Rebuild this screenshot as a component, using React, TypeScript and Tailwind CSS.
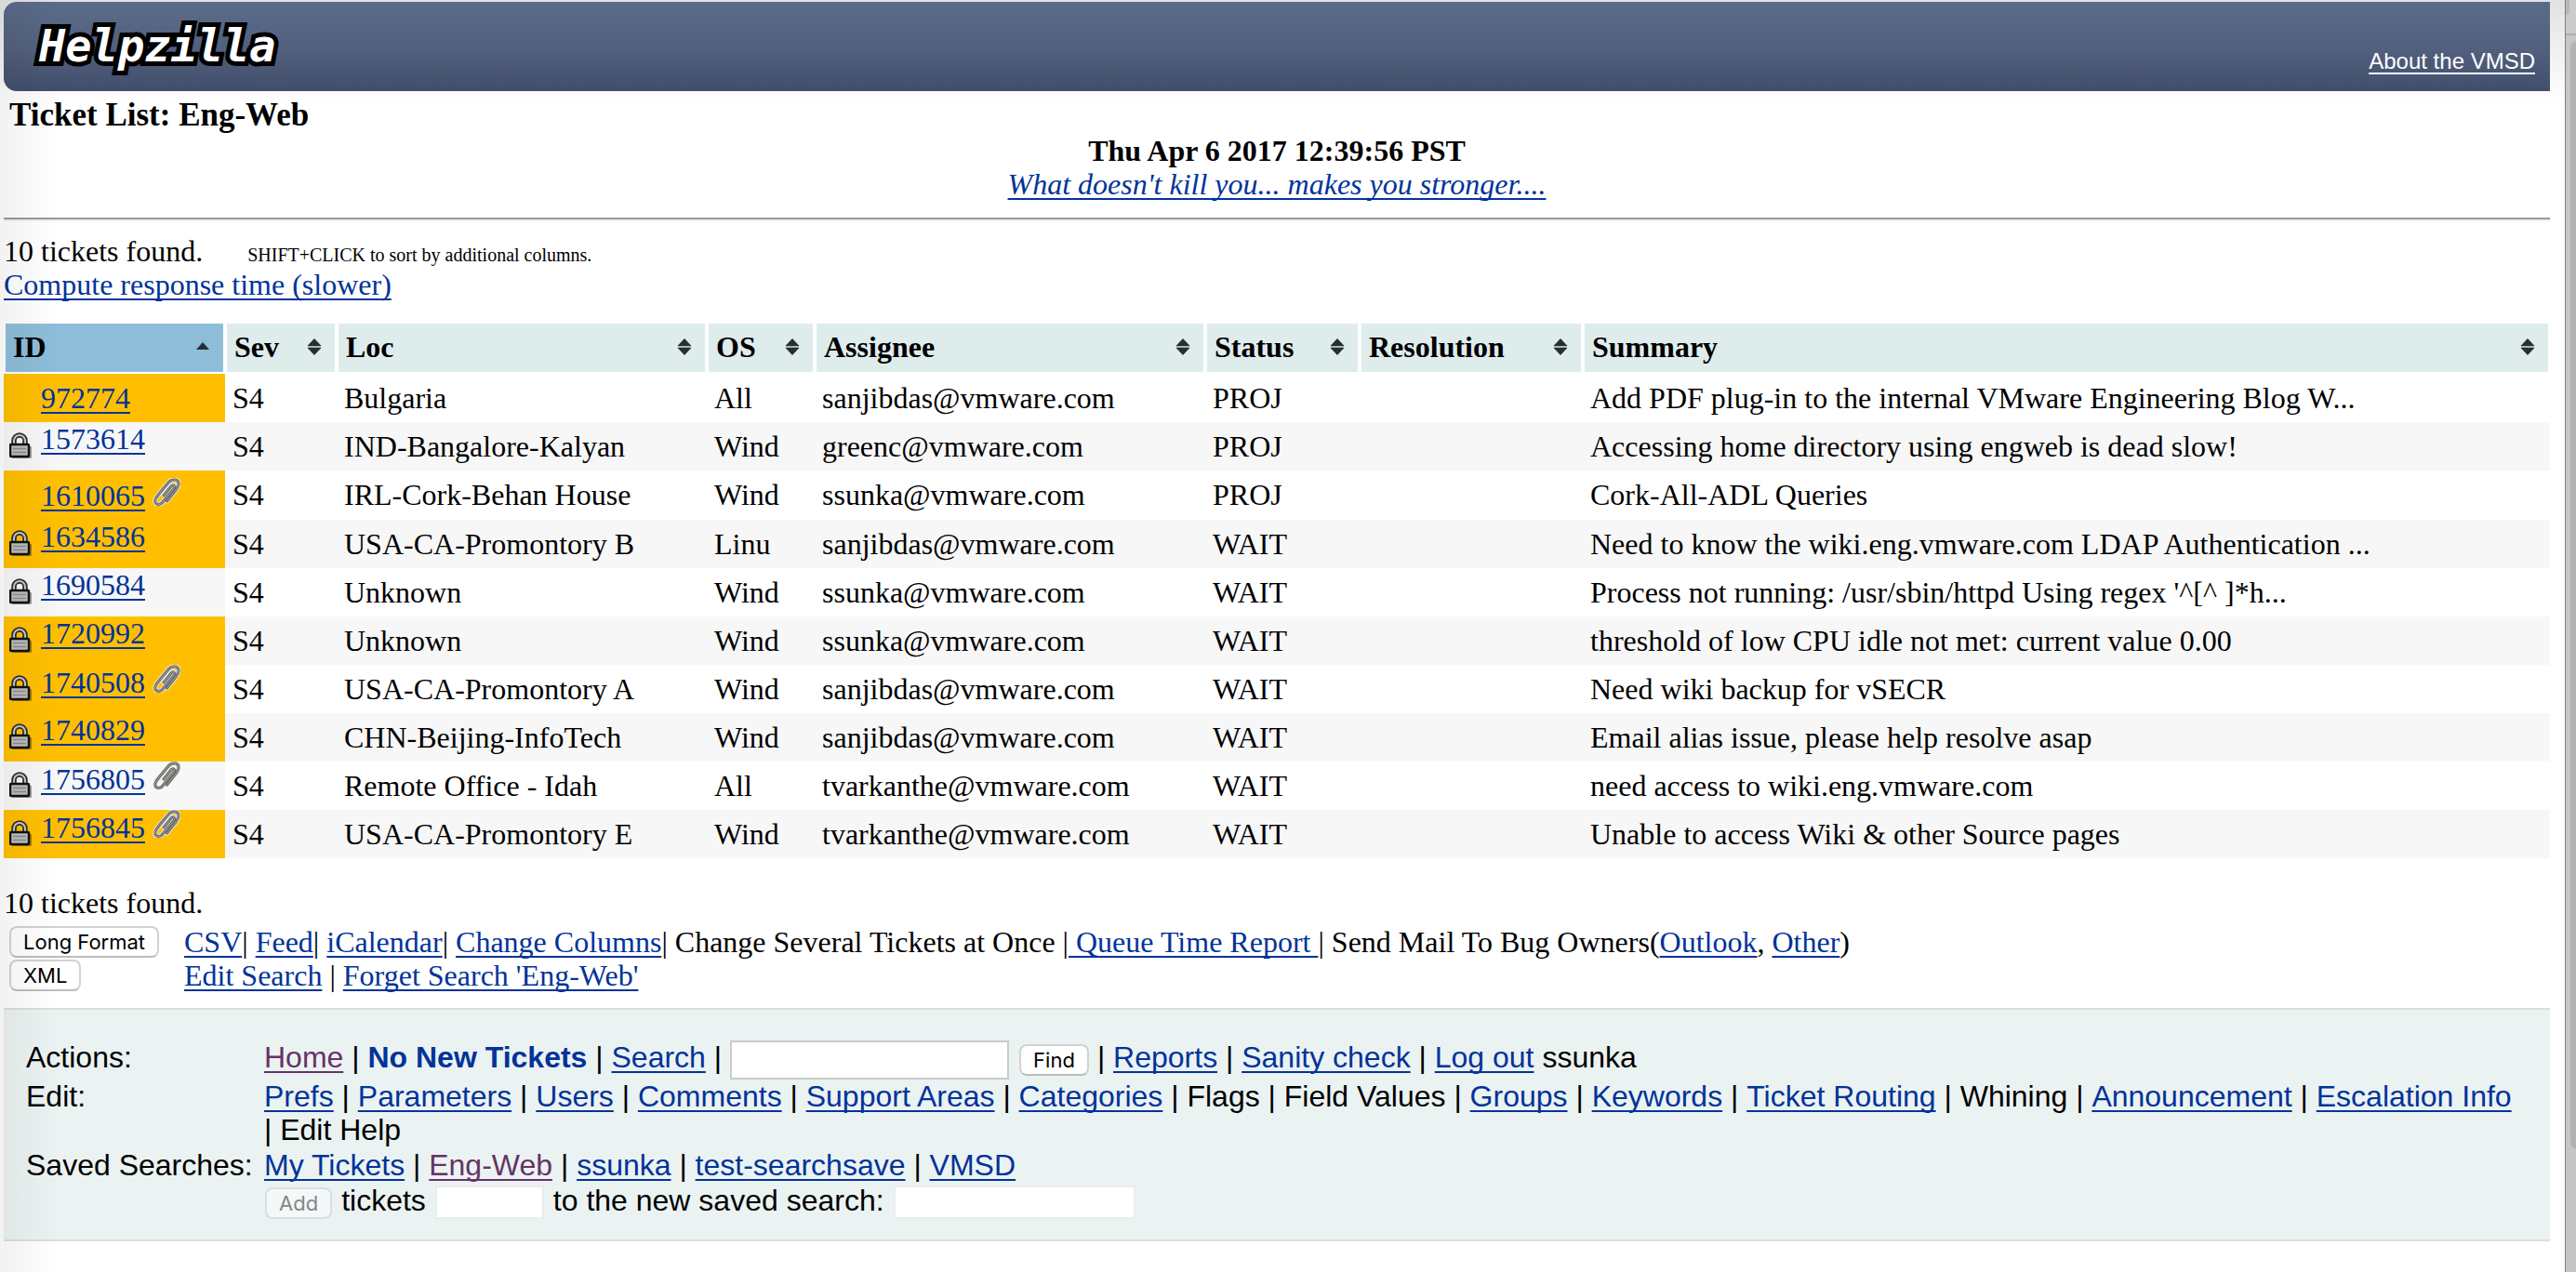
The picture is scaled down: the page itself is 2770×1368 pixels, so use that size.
import React from "react";

const serif = "font-['Liberation_Serif',serif]";
const sans = "font-['Liberation_Sans',sans-serif]";

type Ticket = {
  id: string;
  hot: boolean;
  locked: boolean;
  clip: boolean;
  cells: string[];
};

const t = (id: string, flags: string, ...cells: string[]): Ticket => ({
  id,
  hot: flags.includes("h"),
  locked: flags.includes("l"),
  clip: flags.includes("c"),
  cells,
});

const tickets: Ticket[] = [
  t("972774", "h", "S4", "Bulgaria", "All", "sanjibdas@vmware.com", "PROJ", "", "Add PDF plug-in to the internal VMware Engineering Blog W..."),
  t("1573614", "l", "S4", "IND-Bangalore-Kalyan", "Wind", "greenc@vmware.com", "PROJ", "", "Accessing home directory using engweb is dead slow!"),
  t("1610065", "hc", "S4", "IRL-Cork-Behan House", "Wind", "ssunka@vmware.com", "PROJ", "", "Cork-All-ADL Queries"),
  t("1634586", "hl", "S4", "USA-CA-Promontory B", "Linu", "sanjibdas@vmware.com", "WAIT", "", "Need to know the wiki.eng.vmware.com LDAP Authentication ..."),
  t("1690584", "l", "S4", "Unknown", "Wind", "ssunka@vmware.com", "WAIT", "", "Process not running: /usr/sbin/httpd Using regex '^[^ ]*h..."),
  t("1720992", "hl", "S4", "Unknown", "Wind", "ssunka@vmware.com", "WAIT", "", "threshold of low CPU idle not met: current value 0.00"),
  t("1740508", "hlc", "S4", "USA-CA-Promontory A", "Wind", "sanjibdas@vmware.com", "WAIT", "", "Need wiki backup for vSECR"),
  t("1740829", "hl", "S4", "CHN-Beijing-InfoTech", "Wind", "sanjibdas@vmware.com", "WAIT", "", "Email alias issue, please help resolve asap"),
  t("1756805", "lc", "S4", "Remote Office - Idah", "All", "tvarkanthe@vmware.com", "WAIT", "", "need access to wiki.eng.vmware.com"),
  t("1756845", "hlc", "S4", "USA-CA-Promontory E", "Wind", "tvarkanthe@vmware.com", "WAIT", "", "Unable to access Wiki & other Source pages"),
];

const columns = [
  { name: "ID", width: "w-[238px]" },
  { name: "Sev", width: "w-[120px]" },
  { name: "Loc", width: "w-[398px]" },
  { name: "OS", width: "w-[116px]" },
  { name: "Assignee", width: "w-[420px]" },
  { name: "Status", width: "w-[166px]" },
  { name: "Resolution", width: "w-[240px]" },
  { name: "Summary", width: "" },
];

function A({ children, visited }: { children: React.ReactNode; visited?: boolean }) {
  return (
    <a
      href="#"
      className={`underline decoration-2 underline-offset-4 [text-decoration-skip-ink:none] ${visited ? "text-[#663366]" : "text-[#003399]"}`}
    >
      {children}
    </a>
  );
}

function SortIcon({ active }: { active: boolean }) {
  return active ? (
    <svg width="16" height="18" viewBox="0 0 16 18" aria-hidden="true">
      <path d="M8 4L15 12H1Z" fill="#263032" />
    </svg>
  ) : (
    <svg width="16" height="18" viewBox="0 0 16 18" aria-hidden="true">
      <rect x="1" y="7" width="14" height="4" fill="#a9b5b5" />
      <path d="M8 0L15.5 8H0.5Z M8 18L15.5 10H0.5Z" fill="#263032" />
    </svg>
  );
}

function LockIcon() {
  return (
    <svg width="26" height="30" viewBox="0 0 26 30" className="absolute left-1.5 top-[11px]" aria-label="Restricted">
      <rect x="3" y="15" width="21" height="13" rx="1" fill="#000" opacity="0.35" />
      <path d="M5 14V9a6 6 0 0 1 12 0V14" fill="none" stroke="#2e2e2e" strokeWidth="5.500" />
      <path d="M5 14V9a6 6 0 0 1 12 0V14" fill="none" stroke="#c9c9c9" strokeWidth="2" />
      <rect x="1" y="13" width="20" height="13" rx="1" fill="#bdbdbd" stroke="#111111" strokeWidth="2.500" />
      <path d="M4 17.500h14M4 21.500h14" stroke="#8a8a8a" strokeWidth="1.500" />
    </svg>
  );
}

function ClipIcon() {
  const wire =
    "M12 19L20 9c2-2.500 5-.5 3 2.500L11 26c-3 4-9 3-8-2.500c.5-2 2-4 4-6.500L17.500 4.500c3-3.500 11-4 10.500 2.500c-.3 2.500-1.500 4-3 6L15.500 25";
  return (
    <svg width="30" height="30" viewBox="0 0 30 30" className="inline-block align-baseline" aria-label="Has attachment">
      <path d={wire} fill="none" stroke="#efece2" strokeWidth="5" strokeLinecap="round" />
      <path d={wire} fill="none" stroke="#666666" strokeWidth="3" strokeLinecap="round" />
      <path d={wire} fill="none" stroke="#a8a8a8" strokeWidth="1" strokeLinecap="round" />
    </svg>
  );
}

function PushButton({ children, disabled }: { children: React.ReactNode; disabled?: boolean }) {
  return (
    <button
      type="button"
      disabled={disabled}
      className="h-[34px] rounded-lg border-2 border-[#d2d2d2] border-b-[#bdbdbd] bg-white px-[13px] font-['Inter',sans-serif] text-[22px] leading-[30px] text-black disabled:border-[#d9dede] disabled:bg-[#f5f8f8] disabled:text-[#858787]"
    >
      {children}
    </button>
  );
}

function LinkBar({ items }: { items: { label: string; plain?: boolean; visited?: boolean }[] }) {
  return (
    <>
      {items.map((item, i) => (
        <React.Fragment key={item.label}>
          {i > 0 && " |\u00a0"}
          {item.plain ? item.label : <A visited={item.visited}>{item.label}</A>}
        </React.Fragment>
      ))}
    </>
  );
}

function Scrollbar() {
  return (
    <div className="flex w-3 shrink-0 flex-col overflow-hidden border-l border-[#808080] bg-[#c6c6c6]" aria-hidden="true">
      <div className="h-[38px] shrink-0 border-b-2 border-[#adadad] bg-[#cbcbcb]">
        <div className="h-4 w-1 rounded-br bg-[#b8b8b8]" />
      </div>
      <div className="ml-[5px] mt-1.5 w-4 flex-[9] rounded-lg bg-[#b2b2b2]" />
      <div className="flex-1" />
    </div>
  );
}

export default function App() {
  return (
    <div className={`relative flex min-h-screen bg-white text-[32px] leading-[36px] text-black ${serif}`}>
      <div className="min-w-0 flex-1 bg-[linear-gradient(to_bottom,#e2e2e2,#ffffff_112px)] pl-1 pr-4 pt-0.5">
        <header className="flex h-24 items-center justify-between rounded-l-[14px] bg-linear-to-b from-[#5a6b88] via-[#53617f] to-[#414e6b] pl-[38px] pr-4">
          <span className="font-['DejaVu_Sans_Mono',monospace] text-[47px] font-bold italic leading-[56px] text-white [-webkit-text-stroke:10px_#000] [paint-order:stroke_fill]">
            Helpzilla
          </span>
          <a href="#" className={`mt-8 text-2xl text-white underline decoration-2 underline-offset-4 ${sans}`}>
            About the VMSD
          </a>
        </header>

        <h1 className="ml-1.5 mt-1.5 text-[35px] font-bold leading-[40px]">Ticket List: Eng-Web</h1>
        <div className="text-center">
          <p className="font-bold">Thu Apr 6 2017 12:39:56 PST</p>
          <p className="italic">
            <A>What doesn't kill you... makes you stronger....</A>
          </p>
        </div>
        <hr className="mt-[18px] border-b-2 border-t-2 border-b-[#eeeeee] border-t-[#999999]" />

        <p className="mt-3.5">
          10 tickets found.<span className="ml-12 text-xl">SHIFT+CLICK to sort by additional columns.</span>
        </p>
        <p>
          <A>Compute response time (slower)</A>
        </p>

        <table className="mt-[22px] w-full table-fixed border-separate border-spacing-0 text-left">
          <thead>
            <tr>
              {columns.map((c, i) => (
                <th
                  key={c.name}
                  scope="col"
                  className={`border-2 border-white p-0 ${c.width} ${i === 0 ? "bg-[#8dbdd9]" : "bg-[#deecec]"}`}
                >
                  <button type="button" className="flex h-[52px] w-full items-center justify-between pb-0.5 pl-2 pr-3.5 text-left font-bold">
                    {c.name}
                    <SortIcon active={i === 0} />
                  </button>
                </th>
              ))}
            </tr>
          </thead>
          <tbody>
            {tickets.map((k) => (
              <tr key={k.id} className="even:bg-[#f7f7f7]">
                <td
                  className={`relative h-[52px] whitespace-nowrap pl-10 align-top ${k.locked ? "py-0" : "py-2"} ${k.hot ? "bg-[#ffbf00]" : "bg-[#f7f7f7]"}`}
                >
                  {k.locked && <LockIcon />}
                  <A>{k.id}</A>
                  {k.clip && " "}
                  {k.clip && <ClipIcon />}
                </td>
                {k.cells.map((text, i) => (
                  <td key={i} className="whitespace-nowrap px-2 py-2 align-top">
                    {text}
                  </td>
                ))}
              </tr>
            ))}
          </tbody>
        </table>

        <p className="mt-[30px]">10 tickets found.</p>
        <div className="mt-1.5 flex">
          <div className="ml-1.5 mt-px flex w-[188px] flex-col items-start gap-0.5">
            <PushButton>Long Format</PushButton>
            <PushButton>XML</PushButton>
          </div>
          <div>
            <p>
              <A>CSV</A>| <A>Feed</A>| <A>iCalendar</A>| <A>Change Columns</A>| Change Several Tickets at Once |
              <A>&nbsp;Queue Time Report&nbsp;</A>| Send Mail To Bug Owners(<A>Outlook</A>, <A>Other</A>)
            </p>
            <p>
              <A>Edit Search</A> | <A>Forget Search 'Eng-Web'</A>
            </p>
          </div>
        </div>

        <footer
          className={`mt-[17px] grid grid-cols-[256px_1fr] border-y-2 border-[#dddddd] bg-[#ebf2f2] pb-[22px] pl-6 pr-8 pt-[33px] ${sans}`}
        >
          <div>Actions:</div>
          <form className="flex h-[42px] gap-x-[9px] whitespace-pre">
            <span>
              <A visited>Home</A> |{" "}
              <a href="#" className="font-bold text-[#003399]">
                No New Tickets
              </a>{" "}
              | <A>Search</A> |
            </span>
            <input aria-label="Find tickets" className="h-[42px] w-[300px] border-2 border-[#c8cccc] bg-white px-1" />
            <span className="ml-0.5 mt-1 flex">
              <PushButton>Find</PushButton>
            </span>
            <span>
              | <A>Reports</A> | <A>Sanity check</A> | <A>Log out</A> ssunka
            </span>
          </form>

          <div>Edit:</div>
          <div className="pb-0.5">
            <LinkBar
              items={[
                { label: "Prefs" },
                { label: "Parameters" },
                { label: "Users" },
                { label: "Comments" },
                { label: "Support Areas" },
                { label: "Categories" },
                { label: "Flags", plain: true },
                { label: "Field Values", plain: true },
                { label: "Groups" },
                { label: "Keywords" },
                { label: "Ticket Routing" },
                { label: "Whining", plain: true },
                { label: "Announcement" },
                { label: "Escalation Info" },
                { label: "Edit\u00a0Help", plain: true },
              ]}
            />
          </div>

          <div>Saved Searches:</div>
          <div>
            <LinkBar
              items={[
                { label: "My Tickets" },
                { label: "Eng-Web", visited: true },
                { label: "ssunka" },
                { label: "test-searchsave" },
                { label: "VMSD" },
              ]}
            />
          </div>

          <form className="col-start-2 flex gap-x-2.5 pt-0.5">
            <span className="ml-px mt-1 flex">
              <PushButton disabled>Add</PushButton>
            </span>
            <label htmlFor="ticket-ids">tickets</label>
            <input id="ticket-ids" className="mt-0.5 h-9 w-[117px] border-2 border-[#e9eded] bg-white px-1" />
            <label htmlFor="search-name">to the new saved search:</label>
            <input id="search-name" className="mt-0.5 h-9 w-[260px] border-2 border-[#e9eded] bg-white px-1" />
          </form>
        </footer>
      </div>
      <Scrollbar />
      <div className="pointer-events-none absolute inset-y-0 left-0 w-16 bg-linear-to-r from-black/5 to-transparent" />
    </div>
  );
}
